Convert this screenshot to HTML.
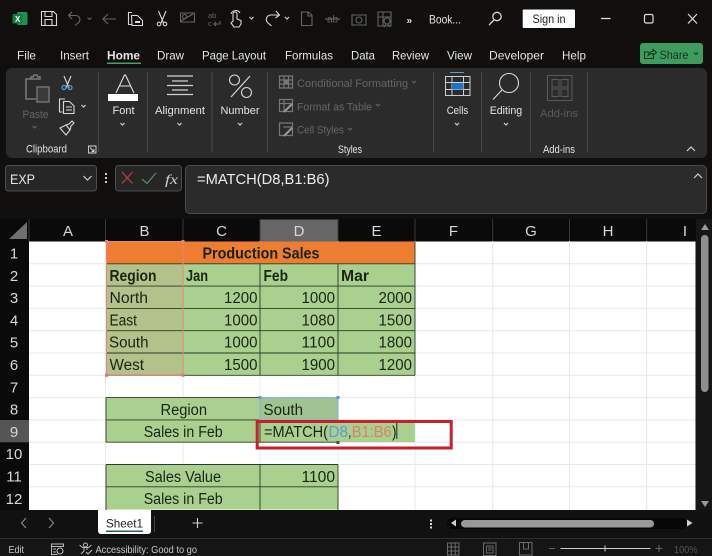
<!DOCTYPE html>
<html lang="en">
<head>
<meta charset="utf-8">
<title>Excel MATCH formula</title>
<style>
html,body{margin:0;padding:0;background:#100f0e;width:712px;height:556px;overflow:hidden}
svg{display:block}
text{font-family:"Liberation Sans",sans-serif}
.tab{font-size:12px;fill:#e4e4e4}
.rb{font-size:11px;fill:#e4e4e4}
.dim{font-size:11px;fill:#666}
.hd{font-size:15px;fill:#d8d8d8;text-anchor:middle}
.c{font-size:15.5px;fill:#1a2414}
.b{font-weight:bold}
.st{font-size:10px;fill:#c8c8c8}
.i{fill:none;stroke:#d8d8d8;stroke-width:1.1}
.g{fill:none;stroke:#666;stroke-width:1.1}
.m{fill:none;stroke:#777;stroke-width:1.2}
.ch{fill:none;stroke:#cfcfcf;stroke-width:1.2}
</style>
</head>
<body>
<svg width="712" height="556" viewBox="0 0 712 556" xmlns="http://www.w3.org/2000/svg">
<rect width="712" height="556" fill="#100f0e"/>

<!-- Title bar -->
<rect x="17" y="12" width="10.500" height="13" rx="1.500" fill="#1f8f52"/>
<rect x="12.500" y="14" width="10" height="9.500" rx="1" fill="#0f7a42"/>
<text x="15" y="22" style="font-size:8px;font-weight:bold;fill:#fff">X</text>
<path class="i" d="M41.500 11.500h12l3 3v11h-15zM45 11.500v5h7v-5M45 25.500v-6h7v6"/>
<path class="g" d="M72 12l-3.500 3.500 3.500 3.500M68.500 15.500h7.500a4 4 0 0 1 3 6.500l-4 3.500"/>
<path class="g" d="M87.500 17.500l2 2 2-2"/>
<path class="g" d="M116 19h-13M108 14l-5 5 5 5"/>
<path class="i" d="M132 12.500h-3.500v12h4M131.500 15.500h6l5 5v5h-10.500z"/><path d="M135 21h5v2h-5z" fill="#d8d8d8"/>
<path class="i" d="M158.500 11l5 12M166 11l-5 12"/><circle class="i" cx="159" cy="24" r="1.800"/><circle class="i" cx="165" cy="24" r="1.800"/>
<path class="g" d="M180.500 13h14v9h-14zM181 21l12-7"/><circle class="g" cx="184.500" cy="16.500" r="2"/>
<text x="208" y="18" style="font-size:7.500px;fill:#666">ab</text><text x="208" y="26" style="font-size:7.500px;fill:#666">c</text><path class="g" d="M220 21v3h-6M216 22l-2 2 2 2"/>
<path class="i" d="M233 21v-7a2 2 0 0 1 4 0v5l4 1.500v3.500l-2 3h-5l-3-4zM231 14a5 5 0 0 1 9-1"/>
<path class="ch" d="M249.500 17l2 2 2-2"/>
<path class="i" d="M276 11l3.500 4-4 3M279 15h-8.500a4.500 4.500 0 0 0-3 7.500l4 3.500"/>
<path class="ch" d="M285 17l2 2 2-2"/>
<path class="g" d="M301.500 12h7l3.500 3.500v10h-10.500zM308 12v4h4"/>
<text x="327" y="22.500" style="font-size:10px;fill:#666">ab</text><path class="g" d="M325 19h15"/>
<path class="g" d="M352 15h14v10h-14z"/><circle class="g" cx="359" cy="20" r="3"/>
<path class="g" d="M378 12h13v14h-13zM378 17h13M383 12v14"/><circle class="g" cx="387" cy="21" r="3"/><path class="g" d="M384 27l2-3M390 27l-2-3"/>
<text x="406.500" y="23.500" class="rb" style="font-size:10px;font-weight:bold">»</text>
<text x="429" y="23.500" class="tab" textLength="32" lengthAdjust="spacingAndGlyphs">Book...</text>
<circle class="i" cx="497" cy="16.500" r="4.200" style="stroke-width:1.300"/><path class="i" d="M494 20l-5 5" style="stroke-width:1.300"/>
<rect x="522.700" y="9.500" width="52.300" height="18.500" rx="1" fill="#fff"/>
<text x="532.500" y="23" style="font-size:12px;fill:#222" textLength="33" lengthAdjust="spacingAndGlyphs">Sign in</text>
<path d="M601 18.500h9.500" stroke="#ddd" stroke-width="1.300"/>
<rect x="644.500" y="14.500" width="8.500" height="8.500" rx="1.500" fill="none" stroke="#ddd" stroke-width="1.200"/>
<path d="M688 14l9 9.500M697 14l-9 9.500" stroke="#ddd" stroke-width="1.200"/>

<!-- Tabs -->
<text x="17" y="59.500" class="tab" textLength="19" lengthAdjust="spacingAndGlyphs">File</text>
<text x="60" y="59.500" class="tab" textLength="29" lengthAdjust="spacingAndGlyphs">Insert</text>
<text x="107" y="59.500" class="tab" style="font-weight:bold" textLength="33" lengthAdjust="spacingAndGlyphs">Home</text>
<rect x="107" y="62.500" width="34" height="1.500" fill="#4d9e6b"/>
<text x="157" y="59.500" class="tab" textLength="27" lengthAdjust="spacingAndGlyphs">Draw</text>
<text x="202" y="59.500" class="tab" textLength="64" lengthAdjust="spacingAndGlyphs">Page Layout</text>
<text x="285" y="59.500" class="tab" textLength="48" lengthAdjust="spacingAndGlyphs">Formulas</text>
<text x="351" y="59.500" class="tab" textLength="24" lengthAdjust="spacingAndGlyphs">Data</text>
<text x="392" y="59.500" class="tab" textLength="37" lengthAdjust="spacingAndGlyphs">Review</text>
<text x="447" y="59.500" class="tab" textLength="25" lengthAdjust="spacingAndGlyphs">View</text>
<text x="489" y="59.500" class="tab" textLength="55" lengthAdjust="spacingAndGlyphs">Developer</text>
<text x="562" y="59.500" class="tab" textLength="24" lengthAdjust="spacingAndGlyphs">Help</text>
<rect x="640" y="43" width="63" height="21" rx="3" fill="#3e9c5e"/>
<path d="M649 52h-4.500v6.500h9V56M648 55.500c.5-2.500 2.500-4 5-4v-2l3.500 3-3.500 3v-2c-2 0-3.500.5-5 2z" fill="none" stroke="#16321f" stroke-width="1"/>
<text x="659.500" y="59" style="font-size:12px;fill:#16321f" textLength="29" lengthAdjust="spacingAndGlyphs">Share</text>
<path d="M694 52.500l2 2 2-2" fill="none" stroke="#16321f" stroke-width="1.100"/>

<!-- Ribbon -->
<rect x="6" y="68" width="701" height="90" rx="6" fill="#2b2b2b"/>
<path d="M98.500 72v80M147.500 72v80M212 72v80M267.500 72v80M433.500 72v80M481.500 72v80M530.500 72v80M587.500 72v80" stroke="#484848" stroke-width="1"/>
<!-- clipboard group -->
<path class="m" style="stroke-width:1.600" d="M36 79h-10v20h10M31 79v-2h2l1-2h3l1 2h2v2h-9z"/>
<rect x="37" y="87" width="12" height="15" fill="#3a3a3a" stroke="#777" stroke-width="1.400"/>
<text x="22.500" y="118" class="dim" textLength="26" lengthAdjust="spacingAndGlyphs">Paste</text>
<path class="g" d="M32.500 126l2 2 2-2"/>
<path class="i" d="M64 76l5 12M71 76l-5 12"/><circle cx="64" cy="87.500" r="2" fill="none" stroke="#5b9bd5" stroke-width="1.200"/><circle cx="70" cy="87.500" r="2" fill="none" stroke="#5b9bd5" stroke-width="1.200"/>
<path class="i" d="M65 99h-5.500v13h3M63.500 101.500h6l4.500 4.500v7.500h-10.500zM66 107h6M66 110h6"/>
<path class="ch" d="M81.500 105l2 2 2-2"/>
<path class="i" d="M60 128l6 7 4-5-4-5zM66 125l3-1 3-3 2 2-3 3-1 4"/>
<text x="26" y="152.500" class="rb" textLength="41" lengthAdjust="spacingAndGlyphs">Clipboard</text>
<path class="i" d="M88.500 146h7.500v7h-7.500z" style="stroke-width:.9"/><path class="i" d="M90 147.500l4 4M94 149v2.500h-2.500" style="stroke-width:.9"/>
<!-- font -->
<path d="M116 93l8.500-18h1l8.500 18M119 86h12" fill="none" stroke="#e0e0e0" stroke-width="1.100"/>
<rect x="108" y="94" width="30" height="7" fill="#fff"/>
<text x="112.500" y="114" class="rb" textLength="22" lengthAdjust="spacingAndGlyphs">Font</text>
<path class="ch" d="M120.500 123l2 2 2-2"/>
<!-- alignment -->
<path d="M167 76h26M172 81h16M167 85.500h26M172 90h16M167 94.500h26" stroke="#cfcfcf" stroke-width="1.200"/>
<text x="155" y="114" class="rb" textLength="50" lengthAdjust="spacingAndGlyphs">Alignment</text>
<path class="ch" d="M177.500 123l2 2 2-2"/>
<!-- number -->
<path d="M250 76l-19 21" stroke="#d8d8d8" stroke-width="1.200"/><circle class="i" cx="234.500" cy="80" r="5"/><circle class="i" cx="246.500" cy="92.500" r="5"/>
<text x="220.500" y="114" class="rb" textLength="39" lengthAdjust="spacingAndGlyphs">Number</text>
<path class="ch" d="M238 123l2 2 2-2"/>
<!-- styles -->
<path class="m" d="M279.500 76h13v12h-13zM279.500 80h13M279.500 84h13M284 76v12M288.500 76v12"/><rect x="284" y="80" width="4.500" height="4" fill="#777"/>
<path class="m" d="M279.500 99.500h13v12h-13zM279.500 103.500h13M284 99.500v12"/><path d="M284 112l8-8" stroke="#999" stroke-width="2"/>
<path class="m" d="M279.500 123h13v12.500h-13zM283.500 127h9"/><path d="M284 136l8-8" stroke="#999" stroke-width="2"/>
<text x="297" y="87" class="dim" textLength="111" lengthAdjust="spacingAndGlyphs">Conditional Formatting</text><path class="g" d="M412 81l2 2 2-2"/>
<text x="297" y="110.500" class="dim" textLength="75" lengthAdjust="spacingAndGlyphs">Format as Table</text><path class="g" d="M376 104l2 2 2-2"/>
<text x="297" y="133.500" class="dim" textLength="47" lengthAdjust="spacingAndGlyphs">Cell Styles</text><path class="g" d="M348 128l2 2 2-2"/>
<text x="338" y="153" class="rb" textLength="24" lengthAdjust="spacingAndGlyphs">Styles</text>
<!-- cells -->
<path d="M450 72.500h14" stroke="#5b9bd5" stroke-width="1"/>
<rect x="445.500" y="76.500" width="24.500" height="19" fill="none" stroke="#cfcfcf" stroke-width="1"/>
<path d="M445.500 82.500h24.500M445.500 89.500h24.500M452 76.500v19M463.500 76.500v19" stroke="#cfcfcf" stroke-width="1"/>
<rect x="452" y="83" width="11.500" height="6.500" fill="#1d73c5"/>
<text x="446.700" y="114" class="rb" textLength="21.500" lengthAdjust="spacingAndGlyphs">Cells</text>
<path class="ch" d="M455 123l2 2 2-2"/>
<!-- editing -->
<circle class="i" cx="509" cy="83" r="9.500"/><path class="i" d="M502 90l-9 9.500"/>
<text x="489.700" y="114" class="rb" textLength="32.500" lengthAdjust="spacingAndGlyphs">Editing</text>
<path class="ch" d="M504 123l2 2 2-2"/>
<!-- add-ins -->
<path d="M547.500 75.500h24.500v25h-24.500zM552 79.500h7v7.500h-7zM561 79.500h7v7.500h-7zM552 89h7v7.500h-7zM561 89h7v7.500h-7z" fill="none" stroke="#5a5a5a" stroke-width="1"/>
<text x="540" y="117" class="dim" style="fill:#5c5c5c" textLength="38" lengthAdjust="spacingAndGlyphs">Add-ins</text>
<text x="543" y="153" class="rb" textLength="32" lengthAdjust="spacingAndGlyphs">Add-ins</text>
<path class="ch" d="M687 151l4-4 4 4"/>

<!-- Formula bar -->
<rect x="5.500" y="165.500" width="91" height="25.500" rx="3" fill="#262626" stroke="#4d4d4d"/>
<text x="10" y="184" style="font-size:14px;fill:#e6e6e6" textLength="25" lengthAdjust="spacingAndGlyphs">EXP</text>
<path d="M83.500 176l4 4 4-4" fill="none" stroke="#cfcfcf" stroke-width="1.200"/>
<rect x="105" y="173" width="2" height="2" fill="#ccc"/><rect x="105" y="177" width="2" height="2" fill="#ccc"/><rect x="105" y="181" width="2" height="2" fill="#ccc"/>
<rect x="115.500" y="165.500" width="66" height="25.500" rx="3" fill="#262626" stroke="#4d4d4d"/>
<path d="M122 172l10.500 11.500M132.500 172l-10.500 11.500" stroke="#a8403c" stroke-width="1.300"/>
<path d="M142 179l5 4.500 9-10.500" fill="none" stroke="#4c8f5f" stroke-width="1.300"/>
<text x="165" y="184" style="font-family:'Liberation Serif',serif;font-style:italic;font-size:14px;fill:#ccc" textLength="13" lengthAdjust="spacingAndGlyphs">fx</text>
<rect x="185.500" y="165.500" width="521" height="48" rx="4" fill="#2b2b2b" stroke="#4a4a4a"/>
<text x="197" y="184" style="font-size:14.500px;fill:#ececec" textLength="132.500" lengthAdjust="spacingAndGlyphs">=MATCH(D8,B1:B6)</text>
<path d="M694 178l4-4 4 4" fill="none" stroke="#cfcfcf" stroke-width="1.200"/>

<!-- Sheet -->
<rect x="0" y="219" width="696" height="22.500" fill="#0a0a0a"/>
<rect x="0" y="241" width="29" height="269" fill="#0a0a0a"/>
<path d="M9 239h18v-17z" fill="#707070"/>
<rect x="260.500" y="219.500" width="77" height="22" fill="#666"/>
<path d="M29 219v22M105.500 219v22M183 219v22M260 219v22M338 219v22M415 219v22M492.700 219v22M569.500 219v22M646.700 219v22" stroke="#3a3a3a"/>
<text x="68" y="236" class="hd">A</text><text x="144.500" y="236" class="hd">B</text><text x="221.500" y="236" class="hd">C</text><text x="299" y="236" class="hd">D</text><text x="376.500" y="236" class="hd">E</text><text x="453.500" y="236" class="hd">F</text><text x="531" y="236" class="hd">G</text><text x="608" y="236" class="hd">H</text><text x="685" y="236" class="hd">I</text>
<text x="14" y="258.500" class="hd">1</text><text x="14" y="281" class="hd">2</text><text x="14" y="303" class="hd">3</text><text x="14" y="325.500" class="hd">4</text><text x="14" y="347.500" class="hd">5</text><text x="14" y="370" class="hd">6</text><text x="14" y="392.500" class="hd">7</text><text x="14" y="414.500" class="hd">8</text>
<rect x="0" y="420" width="29" height="22.300" fill="#555"/>
<text x="14" y="437" class="hd">9</text><text x="14" y="459" class="hd">10</text><text x="14" y="481.500" class="hd">11</text><text x="14" y="504" class="hd">12</text>

<rect x="29" y="241.500" width="666.500" height="268.500" fill="#fff"/>
<path d="M29 263.800H695.500M29 286.100H695.500M29 308.400H695.500M29 330.700H695.500M29 353H695.500M29 375.300H695.500M29 397.600H695.500M29 419.900H695.500M29 442.200H695.500M29 464.500H695.500M29 486.800H695.500M105.500 241V510M183 241V510M260 241V510M338 241V510M415 241V510M492.700 241V510M569.500 241V510M646.700 241V510" stroke="#e8e8e8" stroke-width="1"/>

<rect x="106" y="241.500" width="309" height="22.300" fill="#ed7d31"/>
<rect x="106" y="263.800" width="309" height="111.500" fill="#a9d08e"/>
<rect x="106" y="263.800" width="77" height="111.500" fill="#b3c18a"/>
<path d="M106 286.100H415M106 308.400H415M106 330.700H415M106 353H415M106 375.300H415M106 263.800H415M183 263.800V375.300M260 263.800V375.300M338 263.800V375.300M415 241.500V375.300" stroke="#2a3c24" stroke-width=".9"/>

<rect x="106" y="397.600" width="232" height="44.600" fill="#a9d08e"/>
<rect x="260" y="397.600" width="78" height="22.300" fill="#a0c490"/>
<rect x="260" y="419.900" width="155" height="22.300" fill="#a9d08e"/>
<path d="M106 397.600H260M106 419.900H338M106 442.200H338M106 397.600V442.200M260 397.600V442.200" stroke="#2a3c24" stroke-width=".9"/>
<rect x="260" y="397.600" width="78" height="22.300" fill="none" stroke="#8db4dc" stroke-width="1.200"/>
<rect x="258.500" y="396" width="3" height="3" fill="#5b9bd5"/><rect x="336.500" y="396" width="3" height="3" fill="#5b9bd5"/>
<rect x="106" y="464.500" width="232" height="45" fill="#a9d08e"/>
<path d="M106 464.500H338M106 486.800H338M106 464.500V510M260 464.500V510M338 464.500V510" stroke="#2a3c24" stroke-width=".9"/>

<rect x="106.500" y="241.500" width="76.500" height="133.800" fill="none" stroke="#e8857a" stroke-width="1"/>
<rect x="105" y="240" width="3" height="3" fill="#e8857a"/><rect x="181.500" y="240" width="3" height="3" fill="#e8857a"/><rect x="105" y="373.800" width="3" height="3" fill="#e0708a"/><rect x="181.500" y="373.800" width="3" height="3" fill="#e0708a"/>

<text x="202.500" y="258.500" class="c b" textLength="117" lengthAdjust="spacingAndGlyphs">Production Sales</text>
<text x="109.500" y="281" class="c b" textLength="47" lengthAdjust="spacingAndGlyphs">Region</text>
<text x="186" y="281" class="c b" textLength="22" lengthAdjust="spacingAndGlyphs">Jan</text>
<text x="263.500" y="281" class="c b" textLength="24.500" lengthAdjust="spacingAndGlyphs">Feb</text>
<text x="341" y="281" class="c b" textLength="28" lengthAdjust="spacingAndGlyphs">Mar</text>
<text x="109.500" y="303" class="c" textLength="38.500" lengthAdjust="spacingAndGlyphs">North</text>
<text x="109.500" y="325.500" class="c" textLength="27.500" lengthAdjust="spacingAndGlyphs">East</text>
<text x="109" y="347.500" class="c" textLength="39.500" lengthAdjust="spacingAndGlyphs">South</text>
<text x="109.500" y="370" class="c" textLength="34.500" lengthAdjust="spacingAndGlyphs">West</text>

<text x="224" y="303" class="c" textLength="33.500" lengthAdjust="spacingAndGlyphs">1200</text><text x="301.500" y="303" class="c" textLength="33.500" lengthAdjust="spacingAndGlyphs">1000</text><text x="378.500" y="303" class="c" textLength="33.500" lengthAdjust="spacingAndGlyphs">2000</text>
<text x="224" y="325.500" class="c" textLength="33.500" lengthAdjust="spacingAndGlyphs">1000</text><text x="301.500" y="325.500" class="c" textLength="33.500" lengthAdjust="spacingAndGlyphs">1080</text><text x="378.500" y="325.500" class="c" textLength="33.500" lengthAdjust="spacingAndGlyphs">1500</text>
<text x="224" y="347.500" class="c" textLength="33.500" lengthAdjust="spacingAndGlyphs">1000</text><text x="301.500" y="347.500" class="c" textLength="33.500" lengthAdjust="spacingAndGlyphs">1100</text><text x="378.500" y="347.500" class="c" textLength="33.500" lengthAdjust="spacingAndGlyphs">1800</text>
<text x="224" y="370" class="c" textLength="33.500" lengthAdjust="spacingAndGlyphs">1500</text><text x="301.500" y="370" class="c" textLength="33.500" lengthAdjust="spacingAndGlyphs">1900</text><text x="378.500" y="370" class="c" textLength="33.500" lengthAdjust="spacingAndGlyphs">1200</text>

<text x="160.500" y="415" class="c" textLength="46.500" lengthAdjust="spacingAndGlyphs">Region</text>
<text x="263.500" y="415" class="c" textLength="39.500" lengthAdjust="spacingAndGlyphs">South</text>
<text x="143.700" y="437" class="c" textLength="79" lengthAdjust="spacingAndGlyphs">Sales in Feb</text>
<text x="264" y="437" class="c" textLength="64" lengthAdjust="spacingAndGlyphs">=MATCH(</text>
<text x="328.500" y="437" class="c" style="fill:#5b9bd5" textLength="19.500" lengthAdjust="spacingAndGlyphs">D8</text>
<text x="348" y="437" class="c" textLength="3.500" lengthAdjust="spacingAndGlyphs">,</text>
<text x="351.700" y="437" class="c" style="fill:#d9816a" textLength="40" lengthAdjust="spacingAndGlyphs">B1:B6</text>
<text x="392" y="437" class="c" textLength="4.500" lengthAdjust="spacingAndGlyphs">)</text>
<path d="M396.800 423v16" stroke="#222" stroke-width="1"/>
<rect x="336.500" y="441" width="3" height="3" fill="#2d5a38"/>
<text x="145" y="482" class="c" textLength="76" lengthAdjust="spacingAndGlyphs">Sales Value</text>
<text x="301.500" y="482" class="c" textLength="33.500" lengthAdjust="spacingAndGlyphs">1100</text>
<text x="143.700" y="504" class="c" textLength="79" lengthAdjust="spacingAndGlyphs">Sales in Feb</text>

<rect x="257.200" y="421.500" width="194" height="26.500" fill="none" stroke="#c5202e" stroke-width="3"/>

<!-- Vertical scrollbar -->
<rect x="696" y="219" width="16" height="291" fill="#161616"/>
<path d="M701 230l4-6 4 6z" fill="#9a9a9a"/>
<rect x="701" y="235" width="7.500" height="157" rx="3.700" fill="#8e8e8e"/>
<path d="M701 501l4 6 4-6z" fill="#9a9a9a"/>

<!-- Sheet tabs -->
<rect x="0" y="510" width="712" height="28" fill="#111"/>
<path d="M26 518l-4.500 5 4.500 5" fill="none" stroke="#8a8a8a" stroke-width="1.100"/>
<path d="M49 518l4.500 5-4.500 5" fill="none" stroke="#8a8a8a" stroke-width="1.100"/>
<path d="M98 510h53v21a3 3 0 0 1-3 3h-47a3 3 0 0 1-3-3z" fill="#fff"/>
<text x="106" y="527.500" style="font-size:12px;fill:#222" textLength="37" lengthAdjust="spacingAndGlyphs">Sheet1</text>
<rect x="106" y="530.500" width="37" height="1.500" fill="#1f6b4a"/>
<path d="M154.500 516v16" stroke="#444"/>
<path d="M197.500 518v10M192.500 523h10" stroke="#d0d0d0" stroke-width="1.100"/>
<rect x="430" y="519.500" width="2" height="2" fill="#ddd"/><rect x="430" y="523" width="2" height="2" fill="#ddd"/><rect x="430" y="526.500" width="2" height="2" fill="#ddd"/>
<rect x="447" y="518" width="240" height="11" rx="5.500" fill="#060606"/>
<path d="M456 519.500v7l-5-3.500z" fill="#cfcfcf"/>
<rect x="461" y="520" width="193" height="7.500" rx="3.700" fill="#999"/>
<path d="M687 519.500v7l5.500-3.500z" fill="#cfcfcf"/>

<!-- Status bar -->
<rect x="0" y="538" width="712" height="18" fill="#151515"/>
<path d="M0 538.500H712" stroke="#2e2e2e"/>
<text x="8.500" y="553" class="st" textLength="15.500" lengthAdjust="spacingAndGlyphs">Edit</text>
<path d="M51.500 544h12v2.500h-12zM51.500 546.500v8h6M53 549h3M53 552h3" class="i" style="stroke:#bbb;stroke-width:1"/><circle cx="60" cy="551" r="3" fill="none" stroke="#bbb" stroke-width="1.100"/>
<circle cx="85.500" cy="545" r="2" fill="none" stroke="#bbb"/><path d="M79.500 545l3 2.500h6l3-2.500M84 548v3l-3 3M87 548v2" fill="none" stroke="#bbb" stroke-width="1"/><path d="M86 552l2 2 4-4" fill="none" stroke="#bbb" stroke-width="1.100"/>
<text x="95.500" y="553" class="st" textLength="101.500" lengthAdjust="spacingAndGlyphs">Accessibility: Good to go</text>
<path d="M447.500 543h11.500v12h-11.500zM447.500 547h11.500M447.500 551h11.500M451.300 543v12M455.200 543v12" fill="none" stroke="#6a6a6a"/>
<path d="M483.500 543h12.500v12.500h-12.500zM486.500 546h6.500v7h-6.500zM488 548h3.500M488 550h3.500" fill="none" stroke="#6a6a6a"/>
<path d="M519.500 542.500h12.500v12.500h-12.500zM523.500 542.500v6.500h5v-6.500" fill="none" stroke="#6a6a6a"/>
<path d="M549 548.500h6" stroke="#666"/>
<path d="M560.500 548.500h90" stroke="#cfcfcf" stroke-width="1.100"/>
<path d="M605 545.500v6" stroke="#cfcfcf"/>
<path d="M655.500 548.500h7M659 545v7" stroke="#666"/>
<text x="674" y="553" class="st" style="fill:#555" textLength="23.500" lengthAdjust="spacingAndGlyphs">100%</text>
</svg>
</body>
</html>
